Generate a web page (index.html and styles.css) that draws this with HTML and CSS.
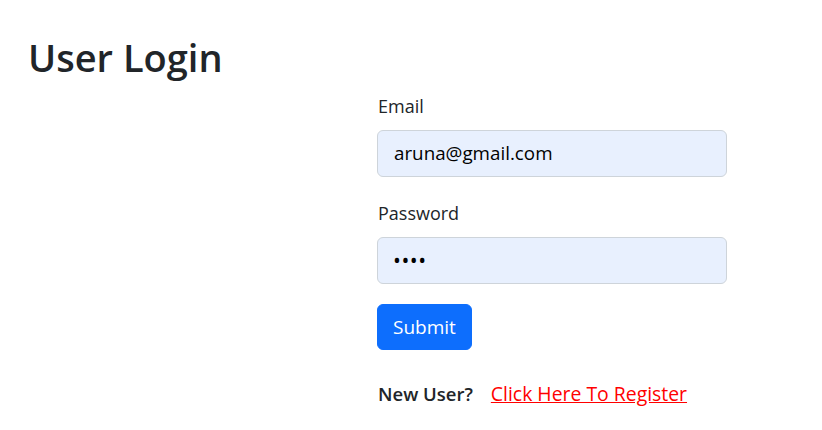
FILE: index.html
```html
<!DOCTYPE html>
<html lang="en">
<head>
<meta charset="utf-8">
<title>User Login</title>
<link rel="stylesheet" href="styles.css">
</head>
<body>
<div class="page">
  <h1 class="title">User Login</h1>
  <form class="login-form">
    <div class="field">
      <label class="label">Email</label>
      <div class="input">aruna@gmail.com</div>
    </div>
    <div class="field">
      <label class="label">Password</label>
      <div class="input password">&#8226;&#8226;&#8226;&#8226;</div>
    </div>
    <button type="button" class="btn">Submit</button>
    <p class="register"><span class="new-user">New User?</span><a href="#" class="reg-link">Click Here To Register</a></p>
  </form>
</div>
</body>
</html>
```
FILE: styles.css
```css
* { box-sizing: border-box; }
html, body { margin: 0; padding: 0; background: #fff; }
body {
  font-family: "Open Sans", "Noto Sans", sans-serif;
  color: #212529;
  font-size: 16px;
  line-height: 1.5;
}
.page { padding: 34px 0 0 28px; }
.title {
  margin: 0;
  font-size: 38px;
  font-weight: 600;
  line-height: 46px;
  color: #212529;
}
.login-form {
  margin: 13px 0 0 349px;
  width: 350px;
  display: flex;
  flex-direction: column;
  align-items: flex-start;
}
.field { width: 100%; margin-bottom: 23px; }
.label {
  display: block;
  padding-left: 1px;
  margin-bottom: 11px;
  font-size: 18px;
  line-height: 26px;
  color: #212529;
}
.input {
  height: 47px;
  width: 100%;
  background: #e8f0fe;
  border: 1px solid #ced4da;
  border-radius: 6px;
  padding: 0 16px;
  display: flex;
  align-items: center;
  font-size: 18.8px;
  color: #000;
}
.password { font-size: 21px; letter-spacing: 0.5px; padding-left: 15px; }
.btn {
  margin-top: -3px;
  height: 46px;
  padding: 0 15px;
  background: #0d6efd;
  color: #fff;
  border: 1px solid #0d6efd;
  border-radius: 6px;
  font-family: inherit;
  font-size: 19px;
}
.register {
  margin: 30px 0 0 1px;
  font-size: 18.5px;
  line-height: 28px;
  font-weight: 600;
}
.new-user { margin-right: 18px; }
.reg-link { color: #f00; font-weight: 400; font-size: 19.4px; text-decoration: underline; }
```
